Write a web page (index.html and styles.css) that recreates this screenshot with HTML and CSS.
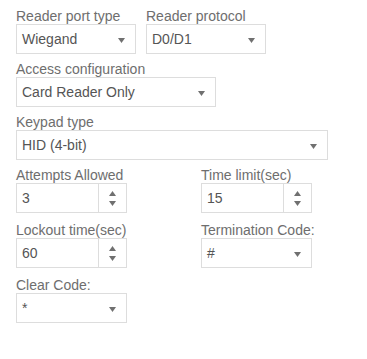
FILE: index.html
```html
<!DOCTYPE html>
<html>
<head>
<meta charset="utf-8">
<link rel="stylesheet" href="styles.css">
</head>
<body>
<div class="form">
  <div class="row">
    <div class="field">
      <div class="label">Reader port type</div>
      <div class="select w120"><span class="val">Wiegand</span><svg class="caret" width="7" height="5" viewBox="0 0 7 5"><path d="M0 0H7L3.5 5Z"/></svg></div>
    </div>
    <div class="field">
      <div class="label">Reader protocol</div>
      <div class="select w120"><span class="val">D0/D1</span><svg class="caret" width="7" height="5" viewBox="0 0 7 5"><path d="M0 0H7L3.5 5Z"/></svg></div>
    </div>
  </div>
  <div class="field">
    <div class="label">Access configuration</div>
    <div class="select w200"><span class="val">Card Reader Only</span><svg class="caret" width="7" height="5" viewBox="0 0 7 5"><path d="M0 0H7L3.5 5Z"/></svg></div>
  </div>
  <div class="field">
    <div class="label">Keypad type</div>
    <div class="select w312"><span class="val">HID (4-bit)</span><svg class="caret" width="7" height="5" viewBox="0 0 7 5"><path d="M0 0H7L3.5 5Z"/></svg></div>
  </div>
  <div class="grid">
    <div class="field">
      <div class="label">Attempts Allowed</div>
      <div class="number"><span class="val">3</span><div class="spin"><svg width="7" height="5" viewBox="0 0 7 5"><path d="M0 5H7L3.5 0Z"/></svg><svg width="7" height="5" viewBox="0 0 7 5"><path d="M0 0H7L3.5 5Z"/></svg></div></div>
    </div>
    <div class="field">
      <div class="label">Time limit(sec)</div>
      <div class="number"><span class="val">15</span><div class="spin"><svg width="7" height="5" viewBox="0 0 7 5"><path d="M0 5H7L3.5 0Z"/></svg><svg width="7" height="5" viewBox="0 0 7 5"><path d="M0 0H7L3.5 5Z"/></svg></div></div>
    </div>
    <div class="field gap9">
      <div class="label">Lockout time(sec)</div>
      <div class="number"><span class="val">60</span><div class="spin"><svg width="7" height="5" viewBox="0 0 7 5"><path d="M0 5H7L3.5 0Z"/></svg><svg width="7" height="5" viewBox="0 0 7 5"><path d="M0 0H7L3.5 5Z"/></svg></div></div>
    </div>
    <div class="field gap9">
      <div class="label">Termination Code:</div>
      <div class="select w111"><span class="val">#</span><svg class="caret" width="7" height="5" viewBox="0 0 7 5"><path d="M0 0H7L3.5 5Z"/></svg></div>
    </div>
    <div class="field gap9">
      <div class="label">Clear Code:</div>
      <div class="select w111"><span class="val">*</span><svg class="caret" width="7" height="5" viewBox="0 0 7 5"><path d="M0 0H7L3.5 5Z"/></svg></div>
    </div>
  </div>
</div>
</body>
</html>
```
FILE: styles.css
```css
html, body {
  margin: 0;
  padding: 0;
  background: #fff;
}
body {
  font-family: "Liberation Sans", Arial, sans-serif;
  font-size: 14px;
  color: #555;
}
.form {
  padding: 1px 0 0 16px;
}
.row {
  display: flex;
  gap: 10px;
}
.field .label {
  margin-top: 7px;
  line-height: 16px;
  color: #6e6e6e;
  white-space: nowrap;
}
.field.gap9 .label {
  margin-top: 9px;
}
.select,
.number {
  box-sizing: border-box;
  height: 30px;
  border: 1px solid #ddd;
  display: flex;
  align-items: center;
  background: #fff;
}
.val {
  padding-left: 5px;
  color: #555;
  line-height: 16px;
}
.select .caret {
  margin-left: auto;
  margin-right: 10px;
  margin-top: 2px;
  fill: #707070;
}
.w120 { width: 120px; }
.w200 { width: 200px; }
.w312 { width: 312px; }
.w111 { width: 111px; }
.number {
  width: 111px;
}
.number .spin {
  margin-left: auto;
  width: 28px;
  height: 100%;
  border-left: 1px solid #ddd;
  box-sizing: border-box;
  display: flex;
  flex-direction: column;
  align-items: center;
  justify-content: center;
  gap: 5px;
  fill: #707070;
}
.grid {
  display: grid;
  grid-template-columns: 111px 111px;
  column-gap: 74px;
}
```
